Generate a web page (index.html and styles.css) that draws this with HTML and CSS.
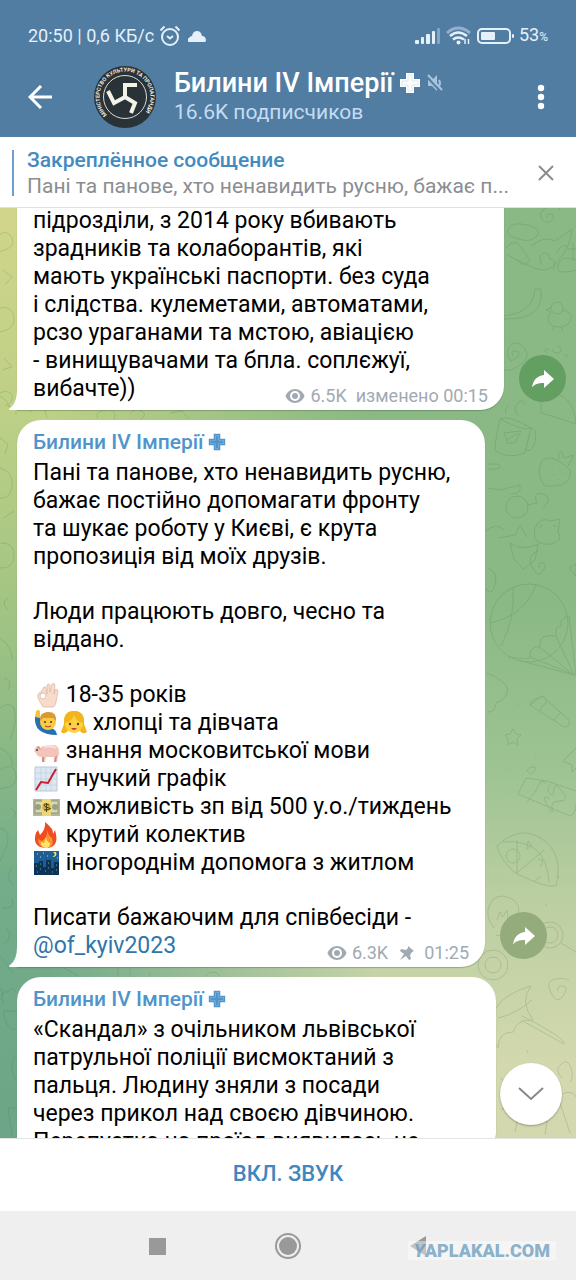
FILE: index.html
```html
<!DOCTYPE html>
<html lang="uk">
<head>
<meta charset="UTF-8">
<meta name="viewport" content="width=device-width, initial-scale=1.0">
<title>Билини IV Імперії</title>
<link rel="stylesheet" href="styles.css">
</head>
<body>

<!-- shared icons -->
<svg class="sprite" aria-hidden="true">
  <symbol id="plus" viewBox="0 0 22 22">
    <path d="M7 1h8v6h6v8h-6v6H7v-6H1V7h6z" fill="currentColor" stroke="none"/>
    <path d="M9 3h4v6h6v4h-6v6H9v-6H3V9h6z" fill="none" stroke-width="1"/>
  </symbol>
  <symbol id="eye" viewBox="0 0 20 16">
    <path d="M10 1C5.500 1 2 4 .5 8 2 12 5.500 15 10 15s8-3 9.500-7C18 4 14.500 1 10 1z" fill="currentColor"/>
    <circle cx="10" cy="8" r="5" fill="#fff"/>
    <circle cx="10" cy="8" r="3" fill="currentColor"/>
  </symbol>
  <symbol id="share" viewBox="0 0 24 20">
    <path d="M13 1l10 9-10 9v-5C7 14 4 15 1 18.500 2 11 6 7 13 6z" fill="#fff"/>
  </symbol>
</svg>

<div class="app">

  <header class="header">
    <div class="status">
      <span>20:50 | 0,6 КБ/c</span>
      <svg width="22" height="22" viewBox="0 0 22 22" fill="none" stroke="currentColor" stroke-width="2">
        <circle cx="11" cy="12" r="8"/>
        <path d="M1.500 5.500l4-4M20.500 5.500l-4-4M8 11l3 2.500 3-2.500"/>
      </svg>
      <svg class="cloud" width="18" height="12" viewBox="0 0 18 12">
        <path d="M2 12a2 2 0 0 1-1-4q1-2 3-2Q5 1 9 1t5 5q4 0 4 5l-1 1z" fill="currentColor"/>
      </svg>
      <svg class="signal" width="26" height="18" viewBox="0 0 26 18" fill="currentColor">
        <rect x="0" y="13" width="4" height="4" rx="1"/>
        <rect x="6" y="10" width="3" height="7" rx="1"/>
        <rect x="11" y="7" width="4" height="10" rx="1"/>
        <rect x="17" y="4" width="3" height="13" rx="1"/>
        <rect x="22" y="1" width="3" height="16" rx="1" opacity=".35"/>
      </svg>
      <svg width="26" height="20" viewBox="0 0 26 20" fill="none" stroke="currentColor">
        <path d="M1 7q11-10 23 0" stroke-width="3" opacity=".45"/>
        <path d="M4 10q8-7 17 0M7 13.500q5-4 11 0" stroke-width="2.600"/>
        <circle cx="12.500" cy="16.500" r="2" fill="currentColor" stroke="none"/>
        <path d="M19 13v5M22.500 18v-5" stroke-width="1.500"/>
      </svg>
      <svg width="37" height="18" viewBox="0 0 37 18">
        <rect x="1" y="2" width="32" height="14" rx="4" fill="none" stroke="currentColor" stroke-width="2"/>
        <rect x="4" y="5" width="14" height="8" rx="1" fill="currentColor"/>
        <rect x="35" y="7" width="2" height="4" rx="1" fill="currentColor"/>
      </svg>
      <span>53<small>%</small></span>
    </div>

    <div class="toolbar">
      <button class="icon-btn back" aria-label="Назад">
        <svg width="24" height="24" viewBox="0 0 24 24" fill="none" stroke="currentColor" stroke-width="3">
          <path d="M24 12H2M13 1L2 12l11 11"/>
        </svg>
      </button>
      <svg class="avatar" viewBox="0 0 124 124">
        <circle cx="62" cy="62" r="62" fill="#293236"/>
        <circle cx="62" cy="62" r="43" fill="none" stroke="#d8dcd6" stroke-width="2"/>
        <path id="ring" d="M26 98A50.900 50.900 0 1 1 98 98" fill="none"/>
        <text class="avatar-text"><textPath href="#ring">МІНІСТЕРСТВО КУЛЬТУРИ ТА ПРОПАГАНДИ</textPath></text>
        <path d="M86 38H62v24l-22 12-12-24M62 62l20 12-8 20" fill="none" stroke="#f3f3e8" stroke-width="8"/>
      </svg>
      <div class="channel">
        <h1 class="channel-name">
          Билини IV Імперії
          <svg class="plus plus-white"><use href="#plus"/></svg>
          <svg class="muted" width="16" height="18" viewBox="0 0 16 18">
            <path d="M1 6h4l5-5v16l-5-5H1z" fill="currentColor"/>
            <path d="M12 6q2 3 0 6" fill="none" stroke="currentColor" stroke-width="2"/>
            <path d="M0 3l14 15" stroke="#527da3" stroke-width="2"/>
            <path d="M1 1l14 15" stroke="currentColor" stroke-width="2"/>
          </svg>
        </h1>
        <p class="subscribers">16.6K подписчиков</p>
      </div>
      <button class="icon-btn" aria-label="Меню">
        <svg width="8" height="26" viewBox="0 0 8 26" fill="currentColor">
          <circle cx="4" cy="4" r="3.200"/><circle cx="4" cy="13" r="3.200"/><circle cx="4" cy="22" r="3.200"/>
        </svg>
      </button>
    </div>
  </header>

  <section class="pinned">
    <div class="pinned-body">
      <div class="pinned-title">Закреплённое сообщение</div>
      <div class="pinned-text">Пані та панове, хто ненавидить русню, бажає п...</div>
    </div>
    <button class="icon-btn" aria-label="Закрыть">
      <svg width="16" height="16" viewBox="0 0 16 16" stroke="#8a8d90" stroke-width="2"><path d="M1 1l14 14M15 1L1 15"/></svg>
    </button>
  </section>

  <main class="chat">
    <!-- wallpaper doodles -->
    <svg class="doodles doodles-left" viewBox="0 0 250 930" width="250" height="930">
      <path d="M-2 28q9-8 14 2t-14 14M3 62l9 7-7 8M0 100q12-3 14 9T0 124M4 150l8 9-10 3M0 185c12-6 18 8 5 13M0 230l8 6-3 10"/>
      <path d="M0 188q7 4 9 11 8-2 7 8M30 204q8-8 15-2l2 8M98 210q-4-6 8-8t8 10M130 206q6-7 12-3t-2 9M170 205l12-2 7 8"/>
      <path d="M0 260q14 4 12 18t-13 12M4 310l10-7M1 335q14 0 13 13T0 360M8 390q-8 4 0 12M0 430q12 8 12 22M4 470q9 3 4 12M0 500q10-8 15 2M0 540q14 6 12 18"/>
      <path d="M14 500q4 16-4 31M0 562q13-9 16 4t-16 15M10 600q8 2 4 10M0 620q16 4 0 33M12 660q-8 10 2 18M2 700q14 2 10-10M6 720q8 8-2 16M0 748l13 17"/>
      <path d="M4 796q-6-14 4-12 3-7 8 0M3 803q4 21 13 18M4 803h13M10 844h1M16 848q-9 10 0 24M8 900h9M8 900l4 28M0 780q6 6 0 12M64 760l14 8M118 760v9M130 760v9M150 765v5M205 768q8-8 15 0"/>
    </svg>
    <svg class="doodles doodles-right" viewBox="0 0 120 930" width="120" height="930">
      <g transform="translate(0 -8)">
        <path d="M39 18q-1-5 4-4t1 6-10-1 6-12 12 4" transform="translate(52 0)"/>
        <path d="M52 30q3-9 19-5t10 11-19 3-10-9M50 48q8-10 14-2t10 14q-7 9-12 0M75 46q14-11 24-5l17-12q-2 19-12 29-10 17-26 10t-28-14M86 65q-5-9 2-12 5-1 6 6 7-1 3 11M101 53q3-9 11-7M120 60q-15-6-18 5t18 5M117 43v18M112 49h8"/>
        <path d="M48 116q29-3 31-27h6q4 31-37 30"/>
        <circle cx="101" cy="108" r="6"/>
        <path d="M95 112q-7 10 2 14 9 3 15-2 6-7 1-11-3-4-7-2M95 108l-5 2 5 2M97 127v4M106 127v4"/>
        <path d="M57 156q-3-6 3-5t0 7-8-2 4-12 13 5-8 18-17-5M91 153q-5-4 2-4M101 147q3-2 4 2t-4 4-4-4M108 155q4-1 4 3M85 213q11 3 35 11-2-28-25-32M85 163v50"/>
        <path d="M44 219q-5 22-5 31 12 10 30 3l6-25M44 219q8-5 31 9-6 4-31-9M74 228q8-1 5 13t-11 8M50 214q-2-6 3-9M62 215q-6-6 0-12t6 2M48 233l17-2-6 12-8 0-1-6zM51 240l11-7"/>
        <path d="M86 261q10-9 28 9 3 18-25 16-10-12-3-25zM104 259q-4-4 1-8l3 7 10-3-6 11M91 267v1M97 265v1M104 267v1M91 273v1M98 274v1M105 273v1M94 280v1M102 279v1M110 274v1"/>
        <circle cx="61" cy="307" r="11"/>
        <path d="M32 264h10q5 4-1 5h-9M32 288l12 2 20-5q2 9-9 9M71 305l10-2q-5-12 6-9t0 14M30 331q10-9 18-1M43 338l16-3 5-10 7 12M79 328q5-12 15-7l10-2-2 13q6 9-7 12-20 2-16-16zM87 325l-4 3M97 325l4 2M54 343q12 9 28 1l-3 16-12 9-9-10z"/>
        <path d="M84 368q-4-5 2-5t1 8-11-4 6-16M31 368q12 4 8 17t-9 3M113 368l7-4v12z"/>
        <circle cx="73" cy="423" r="39"/>
        <path d="M34 423q34-7 46-38M57 388q2 32-12 58M52 457q24 3 22 0-2-9 10-11-2-13 16-10-1-11 5-10-2-8 8-10M74 457l45 18M82 446l36 29M100 436l18 39M113 416l7 60M62 460l56 15"/>
      </g>
      <path d="M31 465q28 12 18 24-3 5-9 6-1 10-9 9M74 497l12-9 27 24q2 7-5 7zM74 497q-2-4 11-8 3-3 6 5-5 3-7 9M97 513l7-8M57 521l3 5 5 1-4 4 1 6-5-3-5 3v-6l-3-4 5-1zM120 540l-13 13 9 4v7l4-4M53 563h1M79 547h1M62 497h1"/>
      <path d="M71 563q2-5 7-4t-3 7zM62 586l8-16 21 3 29 10M62 586l52 22q6-2 6-12M71 594l8-10 6-11 5 2M94 577q-4 6 0 9t4-5 8 2-2 10-8 8-5-4 3-6"/>
      <path d="M41 638q23-22 45-7t14 47q-10 2-39-12-16-12-20-28zM47 634q44-4 46 41M61 632v33l27-23M72 633l4 4-5 4zM82 651l5 2-3 6M79 673l6-5"/>
      <circle cx="57" cy="648" r="7"/>
      <path d="M38 720q-10-12-4-24t20-6 6 22-8 8l-2 9-10-2M41 712l3-8 3 5 4-7 1 8M89 697h2M101 667q3 1 1 4"/>
      <circle cx="94" cy="727" r="13"/><circle cx="94" cy="727" r="8"/><circle cx="37" cy="757" r="15"/><circle cx="37" cy="757" r="8"/>
      <path d="M105 735l15 9M40 800q8-14 35-22-12 15 2 34-16-1-20 12-15 0-15 16-14-16-2-40M42 810q18-4 34-18M65 812l43 24q3-5-42-28M102 783q-1-6 5-5t0 10-12-3 4-14 14 2M71 842q2 2 0 3M44 870q14 8 5 18M106 870q-8-8-1-14t10 4-1 14M102 888q14-8 18 1M45 902q12-9 18 2l-4 20M76 905l7-7 9 7-3 22M104 895l10 30"/>
    </svg>

    <div class="messages">
      <div class="row row-far">
        <article class="bubble bubble-cut">
          <p>
            підрозділи, з 2014 року вбивають<br>
            зрадників та колаборантів, які<br>
            мають українські паспорти. без суда<br>
            і слідства. кулеметами, автоматами,<br>
            рсзо ураганами та мстою, авіацією<br>
            - винищувачами та бпла. соплєжуї,
          </p>
          <div class="last-line">
            <span>вибачте))</span>
            <span class="meta"><svg class="eye"><use href="#eye"/></svg> 6.5K <span class="time">изменено 00:15</span></span>
          </div>
          <svg class="tail" viewBox="0 0 16 20"><path d="M16 20H1q-2-1 0-2Q8 13 8 0h8z" fill="#fff"/></svg>
        </article>
        <button class="share" aria-label="Поделиться"><svg width="24" height="20"><use href="#share"/></svg></button>
      </div>

      <div class="row row-near">
        <article class="bubble">
          <h2 class="author">Билини IV Імперії <svg class="plus plus-small"><use href="#plus"/></svg></h2>
          <p>
            Пані та панове, хто ненавидить русню,<br>
            бажає постійно допомагати фронту<br>
            та шукає роботу у Києві, є крута<br>
            пропозиція від моїх друзів.
          </p>
          <p>
            Люди працюють довго, чесно та<br>
            віддано.
          </p>
          <ul class="offer">
            <li>
              <svg class="emoji" viewBox="0 0 27 28">
                <path d="M10 26q-3-5-5-9-1-5 3-6l6 2 0-9q1-2 3 0v7l2-8q2-2 3 1l-1 9 1-4q2-2 3 1l-2 11q-1 6-5 5z" fill="#f8dccb" stroke="#dfb7a2" stroke-width=".8"/>
                <path d="M8 11l3-5q2-1 2 2l1 5" fill="#f8dccb" stroke="#dfb7a2" stroke-width=".8"/>
                <circle cx="10" cy="15" r="3" fill="#fff" stroke="#dfb7a2" stroke-width=".8"/>
              </svg>
              18-35 років
            </li>
            <li>
              <svg class="emoji" viewBox="0 0 27 28">
                <path d="M2 7q-2 19 22 19-1-7-8-7-8 0-9-11z" fill="#286fae"/>
                <path d="M2 8l1-6q2-2 4 0v7z" fill="#f5c343"/>
                <circle cx="15" cy="13" r="8" fill="#fcca42"/>
                <path d="M7 12Q6 4 14 3q10-1 9 9l-3-3-10 0z" fill="#d79a35"/>
                <circle cx="12" cy="13" r="1" fill="#533421"/><circle cx="18" cy="13" r="1" fill="#533421"/>
                <path d="M12 17q3 2 6 0" stroke="#9a4723" fill="none"/>
              </svg><svg class="emoji" viewBox="0 0 27 28">
                <path d="M4 15Q3 2 14 2t10 13l3 8q-4 3-7-1H8q-4 4-7 1z" fill="#f3b51d"/>
                <circle cx="14" cy="15" r="9" fill="#fdd13f"/>
                <path d="M4 14q8-1 10-8 2 7 10 8 0-12-10-12T4 14z" fill="#f3b51d"/>
                <circle cx="10" cy="15" r="1.200" fill="#593a1c"/><circle cx="18" cy="15" r="1.200" fill="#593a1c"/>
                <path d="M11 19h6q-3 4-6 0z" fill="#cf3834"/>
              </svg>
              хлопці та дівчата
            </li>
            <li>
              <svg class="emoji" viewBox="0 0 27 28">
                <path d="M1 14l2-4 4 1 3-2 11-1q5 1 5 7 1 2-1 4l-1 6h-3v-5h-8l-1 5h-3v-5q-5 0-6-4z" fill="#f3c4ba"/>
                <path d="M3 10l3-1 2 4zM9 20v5h2v-5M24 18l-2 2-1 5h2z" fill="#d68e84"/>
                <circle cx="4" cy="13" r="1" fill="#51322f"/>
                <path d="M11 10q7-2 12 1" stroke="#fae0d8" stroke-width="2" fill="none"/>
              </svg>
              знання московитської мови
            </li>
            <li>
              <svg class="emoji" viewBox="0 0 27 28">
                <path d="M2 2h22v24H2z" fill="#dce7f1" stroke="#b7c9d8"/>
                <path d="M8 2v24M13 2v24M18 2v24M2 8h22M2 14h22M2 20h22" stroke="#bbccdb" stroke-width=".6"/>
                <path d="M3 25l5-8 7 1 8-14" fill="none" stroke="#c91f31" stroke-width="2"/>
              </svg>
              гнучкий графік
            </li>
            <li>
              <svg class="emoji" viewBox="0 0 27 28">
                <path d="M0 6h27v17H0z" fill="#b4b698"/>
                <path d="M2 8h23v12H2z" fill="#d8d9b6" stroke="#8f9474"/>
                <circle cx="5" cy="14" r="3" fill="#9ba17a"/><circle cx="22" cy="14" r="3" fill="#9ba17a"/>
                <path d="M9 6h9v17H9z" fill="#ead77b"/>
                <circle cx="13.500" cy="14" r="4" fill="#d3ad32"/>
                <path d="M16 12q-5-2-5 0t5 3-5 2M13.500 10v9" stroke="#4a4320" fill="none"/>
              </svg>
              можливість зп від 500 у.о./тиждень
            </li>
            <li>
              <svg class="emoji" viewBox="0 0 27 28">
                <path d="M12 1q9 7 8 12l2-4q5 17-8 18Q1 27 2 16q0-4 3-7l2 5Q13 8 12 1z" fill="#f04b22"/>
                <path d="M14 9q1 5 5 8 3 9-6 10-8-1-8-9l4 2q6-4 5-11z" fill="#fc942c"/>
                <path d="M13 16q0 4 4 6 0 5-4 5-6-1-5-6l3 1z" fill="#ffe36d"/>
              </svg>
              крутий колектив
            </li>
            <li>
              <svg class="emoji" viewBox="0 0 27 28">
                <path d="M1 2h25v24H1z" fill="#1d5f94"/>
                <path d="M1 14h5v-2h4v6h3v-7h5v8h3v-6h5v13H1z" fill="#0c335a"/>
                <path d="M20 3q4 3-1 5 6 0 4-5z" fill="#f6e36c"/>
                <path d="M4 5h1M10 4h1M14 7h1M7 8h1M24 9h1" stroke="#bad8df"/>
                <path d="M3 17h1M7 15h1M7 20h1M15 14h1M15 19h1M23 16h1M23 21h1M4 23h1M12 22h1M19 23h1" stroke="#72b36b"/>
              </svg>
              іногороднім допомога з житлом
            </li>
          </ul>
          <p>Писати бажаючим для співбесіди -</p>
          <div class="last-line">
            <a href="#of_kyiv2023">@of_kyiv2023</a>
            <span class="meta">
              <svg class="eye"><use href="#eye"/></svg> 6.3K
              <svg class="pin" width="16" height="16" viewBox="0 0 16 16"><path d="M9 1l6 5-2 1-2 3 1 4-2 1-3-4-6 4 4-6L1 6l1-2 5 1 2-2z" fill="currentColor"/></svg>
              <span class="time">01:25</span>
            </span>
          </div>
          <svg class="tail" viewBox="0 0 16 20"><path d="M16 20H1q-2-1 0-2Q8 13 8 0h8z" fill="#fff"/></svg>
        </article>
        <button class="share share-light" aria-label="Поделиться"><svg width="24" height="20"><use href="#share"/></svg></button>
      </div>

      <div class="row row-last">
        <article class="bubble">
          <h2 class="author">Билини IV Імперії <svg class="plus plus-small"><use href="#plus"/></svg></h2>
          <p>
            «Скандал» з очільником львівської<br>
            патрульної поліції висмоктаний з<br>
            пальця. Людину зняли з посади<br>
            через прикол над своєю дівчиною.<br>
            Перепустка на проїзд виявилась не
          </p>
        </article>
      </div>
    </div>

    <button class="scroll-down" aria-label="Вниз">
      <svg width="26" height="14" viewBox="0 0 26 14" fill="none" stroke="#85888b" stroke-width="2"><path d="M1 1l12 11L25 1"/></svg>
    </button>
  </main>

  <button class="unmute">ВКЛ. ЗВУК</button>

  <nav class="navbar">
    <button class="nav-btn" aria-label="Приложения">
      <svg width="32" height="32" viewBox="0 0 32 32"><path d="M8 8h17v17H8z" fill="#999"/></svg>
    </button>
    <button class="nav-btn" aria-label="Домой">
      <svg width="32" height="32" viewBox="0 0 32 32"><circle cx="16" cy="16" r="12" fill="none" stroke="#999" stroke-width="2"/><circle cx="16" cy="16" r="9" fill="#999"/></svg>
    </button>
    <button class="nav-btn" aria-label="Назад">
      <svg width="32" height="32" viewBox="0 0 32 32"><path d="M7 16l16-10v20z" fill="#999"/></svg>
    </button>
    <span class="watermark"><i>Y</i>APLAKAL.COM</span>
  </nav>

</div>

</body>
</html>
```
FILE: styles.css
```css
* {
  box-sizing: border-box;
}

body {
  margin: 0;
  font-family: Roboto, "Noto Sans", sans-serif;
  font-size: 23px;
  line-height: 28px;
  color: #000;
}

h1, h2, p, ul {
  margin: 0;
  padding: 0;
}

button {
  border: 0;
  padding: 0;
  background: none;
  color: inherit;
  font-family: inherit;
  cursor: pointer;
}

svg {
  flex-shrink: 0;
}

.sprite {
  position: absolute;
  width: 0;
  height: 0;
}

.app {
  display: flex;
  flex-direction: column;
  height: 100vh;
}

/* header */
.header {
  background: #527da3;
  color: #fff;
}

.status {
  display: flex;
  align-items: center;
  gap: 5px;
  padding: 16px 28px 0;
  height: 56px;
  font-size: 18px;
  color: #e4f0fa;
}

.status small {
  font-size: 12px;
}

.cloud {
  margin-left: 2px;
}

.signal {
  margin-left: auto;
}

.toolbar {
  display: flex;
  align-items: center;
  height: 81px;
  padding: 0 28px;
}

.icon-btn {
  display: flex;
  align-items: center;
  justify-content: center;
  height: 48px;
}

.toolbar .icon-btn {
  min-width: 14px;
}

.back {
  margin-right: 42px;
}

.avatar {
  width: 62px;
  height: 62px;
  margin-right: 18px;
}

.avatar-text {
  font-size: 11px;
  font-weight: 700;
  fill: #e9ebe2;
}

.channel {
  flex: 1;
}

.channel-name {
  display: flex;
  align-items: center;
  gap: 6px;
  font-size: 27px;
  font-weight: 500;
  line-height: 30px;
}

.plus {
  width: 22px;
  height: 22px;
}

.plus-white {
  stroke: #dde8f2;
}

.plus-small {
  width: 18px;
  height: 18px;
  stroke: #7fb0da;
}

.muted {
  color: #a8c4dc;
}

.subscribers {
  font-size: 21px;
  color: #c3dcf2;
}

/* pinned message */
.pinned {
  display: flex;
  align-items: center;
  justify-content: space-between;
  height: 71px;
  padding: 2px 22px 0 12px;
  background: #fff;
  border-bottom: 1px solid #dfe2df;
}

.pinned-body {
  border-left: 2px solid #6c9fce;
  padding-left: 13px;
  font-size: 21px;
  line-height: 26px;
  height: 46px;
  display: flex;
  flex-direction: column;
  justify-content: center;
}

.pinned-title {
  font-weight: 500;
  color: #428bc1;
}

.pinned-text {
  color: #8b8d90;
}

/* chat */
.chat {
  position: relative;
  flex: 1;
  min-height: 0;
  overflow: hidden;
  background: linear-gradient(#8ab985 0%, #8ab985 42%, #9dc393 60%, #bccfa2 75%, #d3d8ae 92%, #d3d8ae 100%);
}

.chat::before {
  content: "";
  position: absolute;
  inset: 0;
  background: linear-gradient(#d1d58b 0%, #bdd086 22%, #9fc383 45%, #74ad89 72%, #6ca587 100%);
  -webkit-mask-image: linear-gradient(to right, #000 8%, transparent 65%);
  mask-image: linear-gradient(to right, #000 8%, transparent 65%);
}

.doodles {
  position: absolute;
  top: 0;
  fill: none;
  stroke: #3f7048;
  stroke-width: 1;
  opacity: 0.2;
}

.doodles-left {
  left: 0;
}

.doodles-right {
  right: 0;
}

.messages {
  position: relative;
  display: flex;
  flex-direction: column;
  gap: 10px;
  margin-top: -1px;
}

.row {
  display: flex;
  align-items: flex-end;
  gap: 15px;
  padding-left: 17px;
}

.row-far {
  padding-right: 10px;
}

.row-near {
  padding-right: 29px;
}

.row-last {
  padding-right: 80px;
}

.bubble {
  position: relative;
  flex: 1;
  padding: 8px 16px 0;
  background: #fff;
  border-radius: 24px 24px 24px 0;
  box-shadow: 0 1px 1px rgba(60, 90, 60, 0.35);
  white-space: nowrap;
}

.bubble-cut {
  padding-top: 0;
  border-top-left-radius: 0;
  border-top-right-radius: 0;
}

.tail {
  position: absolute;
  left: -8px;
  bottom: 0;
  width: 16px;
  height: 20px;
}

.author {
  display: flex;
  align-items: center;
  gap: 4px;
  margin-bottom: 3px;
  font-size: 21px;
  font-weight: 500;
  line-height: 28px;
  color: #4f94cb;
}

.bubble p + p,
.offer {
  margin-top: 27px;
}

.offer {
  margin-bottom: 27px;
  list-style: none;
}

.offer li {
  height: 28px;
}

.emoji {
  width: 27px;
  height: 28px;
  vertical-align: top;
}

.last-line {
  display: flex;
  justify-content: space-between;
  height: 35px;
}

.last-line a {
  color: #3275a8;
  text-decoration: none;
}

.meta {
  display: flex;
  align-items: center;
  align-self: flex-end;
  gap: 5px;
  padding-bottom: 2px;
  font-size: 18px;
  line-height: 24px;
  color: #a1aab3;
}

.eye {
  width: 20px;
  height: 16px;
}

.pin {
  margin-left: 6px;
}

.time {
  margin-left: 4px;
}

.share {
  display: flex;
  align-items: center;
  justify-content: center;
  width: 47px;
  height: 47px;
  margin-bottom: 8px;
  border-radius: 50%;
  background: #639f60;
}

.share-light {
  background: #94ac7c;
}

.scroll-down {
  position: absolute;
  right: 14px;
  bottom: 13px;
  display: flex;
  align-items: center;
  justify-content: center;
  width: 62px;
  height: 62px;
  border-radius: 50%;
  background: #fff;
  box-shadow: 0 1px 2px rgba(0, 0, 0, 0.3);
}

/* bottom */
.unmute {
  height: 73px;
  padding-bottom: 3px;
  border-top: 1px solid #e4e4e4;
  background: #fff;
  color: #3f88bf;
  font-size: 22px;
  font-weight: 500;
}

.navbar {
  position: relative;
  display: flex;
  align-items: center;
  justify-content: center;
  gap: 99px;
  height: 69px;
  background: #efefef;
}

.nav-btn {
  display: flex;
}

.watermark {
  position: absolute;
  right: 20px;
  bottom: 20px;
  padding: 0 6px;
  background: rgba(255, 255, 255, 0.4);
  color: rgba(112, 158, 190, 0.8);
  font-size: 18px;
  font-weight: 900;
  line-height: 19px;
}
```
